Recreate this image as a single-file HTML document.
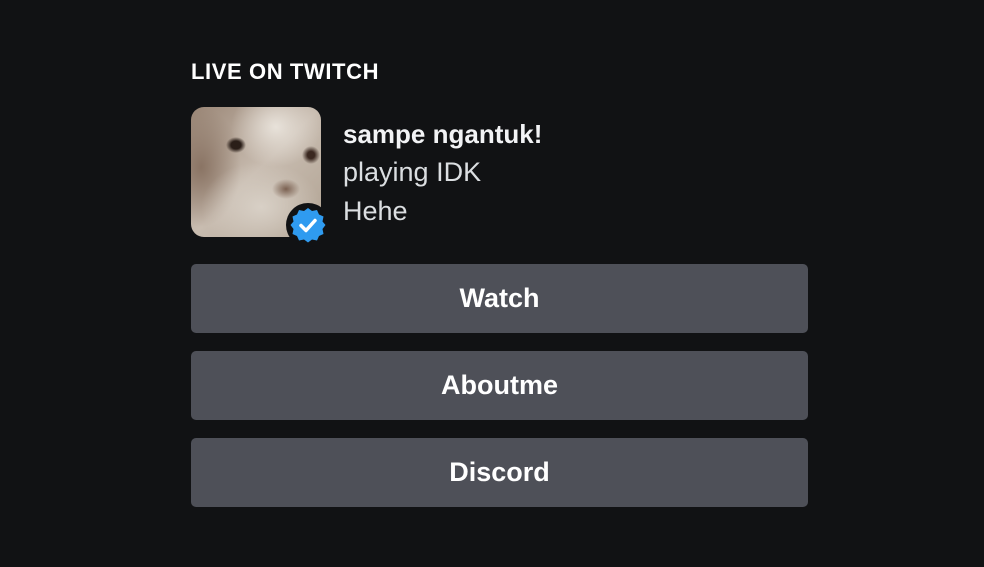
<!DOCTYPE html>
<html><head><meta charset="utf-8"><style>
html,body{margin:0;padding:0;background:#111214;width:984px;height:567px;overflow:hidden;font-family:"Liberation Sans",sans-serif;}
.h{position:absolute;left:191px;top:59px;color:#fff;font-weight:bold;font-size:22px;letter-spacing:0.6px;}
.av{position:absolute;left:191px;top:107px;width:130px;height:130px;border-radius:13px;overflow:hidden;
background:
radial-gradient(ellipse 10px 8px at 45px 38px,#2a1e18 0,#2a1e18 50%,rgba(0,0,0,0) 100%),
radial-gradient(ellipse 9px 9px at 120px 48px,#3a2820 0,#3a2820 40%,rgba(0,0,0,0) 100%),
radial-gradient(ellipse 14px 10px at 95px 82px,#7a6050 0,rgba(122,96,80,0) 100%),
radial-gradient(ellipse 45px 40px at 85px 20px,#e8e2da 0,rgba(232,226,218,0) 100%),
radial-gradient(ellipse 60px 45px at 70px 100px,#d8d0c6 0,rgba(216,208,198,0) 100%),
radial-gradient(ellipse 40px 60px at 10px 60px,#8a7464 0,rgba(138,116,100,0) 100%),
linear-gradient(135deg,#9a8676,#c8bcb0 50%,#b0a292);}
.badge{position:absolute;left:286px;top:203px;width:44px;height:44px;border-radius:50%;background:#111214;}
.badge svg{position:absolute;left:4px;top:4px;}
.t{position:absolute;left:343px;color:#dbdee1;font-size:27px;}
.btn{position:absolute;left:191px;width:617px;height:69px;background:#4e5058;border-radius:5px;color:#fff;font-weight:bold;font-size:27px;text-align:center;line-height:69px;}
</style></head><body>
<div class="h">LIVE ON TWITCH</div>
<div class="av"></div>
<div class="badge"><svg width="36" height="36" viewBox="0 0 36 36">
<path d="M18 1l4 3 5-1 2 4.5 4.5 2-1 5 3 3.5-3 4 1 5-4.5 2-2 4.5-5-1-4 3-4-3-5 1-2-4.5-4.5-2 1-5-3-4 3-3.5-1-5 4.5-2 2-4.5 5 1z" fill="#2f9bf0"/>
<path d="M11 18.5l5 5 9-10" stroke="#fff" stroke-width="3.5" fill="none" stroke-linecap="round" stroke-linejoin="round"/></svg></div>
<div class="t" style="top:119px;font-weight:bold;color:#f2f3f5;font-size:26px;">sampe ngantuk!</div>
<div class="t" style="top:157px;">playing IDK</div>
<div class="t" style="top:196px;">Hehe</div>
<div class="btn" style="top:264px;">Watch</div>
<div class="btn" style="top:351px;">Aboutme</div>
<div class="btn" style="top:438px;">Discord</div>
</body></html>
